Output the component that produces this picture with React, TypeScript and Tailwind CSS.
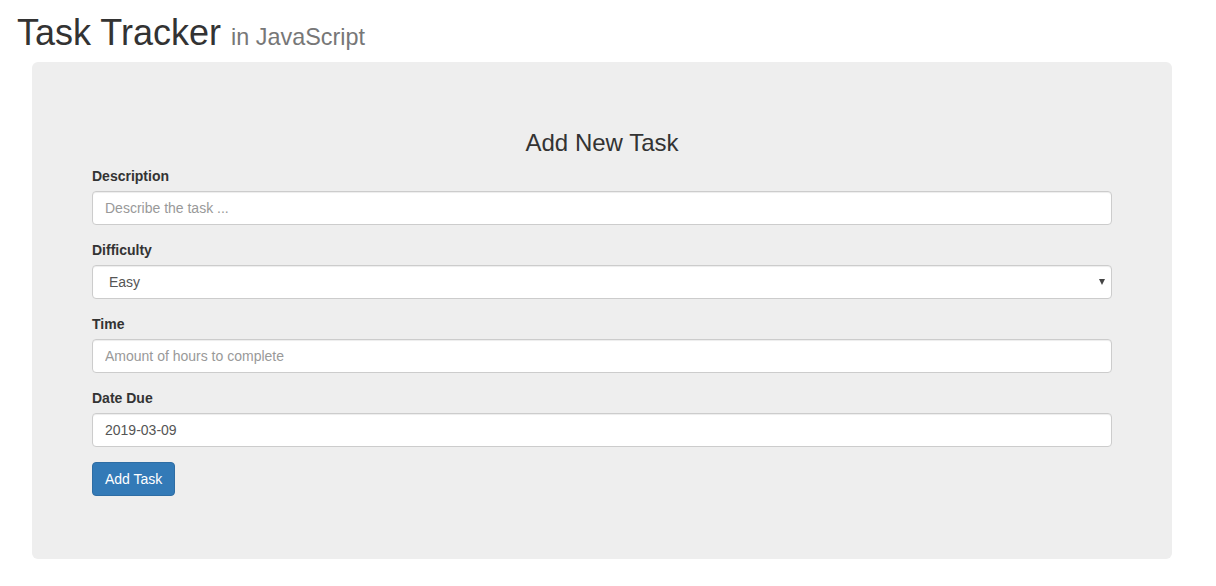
import React from "react";

const font = { fontFamily: '"Liberation Sans", Arial, sans-serif' };

const inputCls =
  "block w-full h-[34px] px-[12px] py-[6px] text-[14px] leading-[20px] text-[#555] bg-white border border-[#ccc] rounded-[4px] shadow-[inset_0_1px_1px_rgba(0,0,0,0.075)] placeholder:text-[#999] outline-none";

const labelCls = "block mb-[5px] text-[14px] leading-[20px] font-bold text-[#333]";

export default function App() {
  return (
    <div style={font} className="min-h-[586px] bg-white text-[#333]">
      <h1 className="pt-[13px] pl-[17px] text-[36px] leading-[39.6px] font-normal text-[#333]">
        Task Tracker <small className="text-[23.4px] text-[#777] font-normal">in JavaScript</small>
      </h1>

      <div className="ml-[32px] mt-[4px] w-[1140px] bg-[#eee] rounded-[6px] px-[60px] pt-[48px] pb-[63px]">
        <h3 className="mt-[20px] mb-[10px] text-center text-[24px] leading-[26.4px] font-normal text-[#333]">
          Add New Task
        </h3>
        <form onSubmit={(e) => e.preventDefault()}>
          <div className="mb-[15px]">
            <label className={labelCls}>Description</label>
            <input className={inputCls} placeholder="Describe the task ..." />
          </div>
          <div className="mb-[15px]">
            <label className={labelCls}>Difficulty</label>
            <div className="relative">
              <select
                className={inputCls + " appearance-none pl-[16px] text-[#555]"}
                defaultValue="Easy"
              >
                <option>Easy</option>
                <option>Medium</option>
                <option>Hard</option>
              </select>
              <span className="pointer-events-none absolute right-[7px] top-[14px] w-0 h-0 border-l-[3.5px] border-r-[3.5px] border-t-[6px] border-l-transparent border-r-transparent border-t-[#444]" />
            </div>
          </div>
          <div className="mb-[15px]">
            <label className={labelCls}>Time</label>
            <input className={inputCls} placeholder="Amount of hours to complete" />
          </div>
          <div className="mb-[15px]">
            <label className={labelCls}>Date Due</label>
            <input className={inputCls} defaultValue="2019-03-09" />
          </div>
          <button
            type="submit"
            className="h-[34px] px-[12px] text-[14px] leading-[20px] text-white bg-[#337ab7] border border-[#2e6da4] rounded-[4px]"
          >
            Add Task
          </button>
        </form>
      </div>
    </div>
  );
}
